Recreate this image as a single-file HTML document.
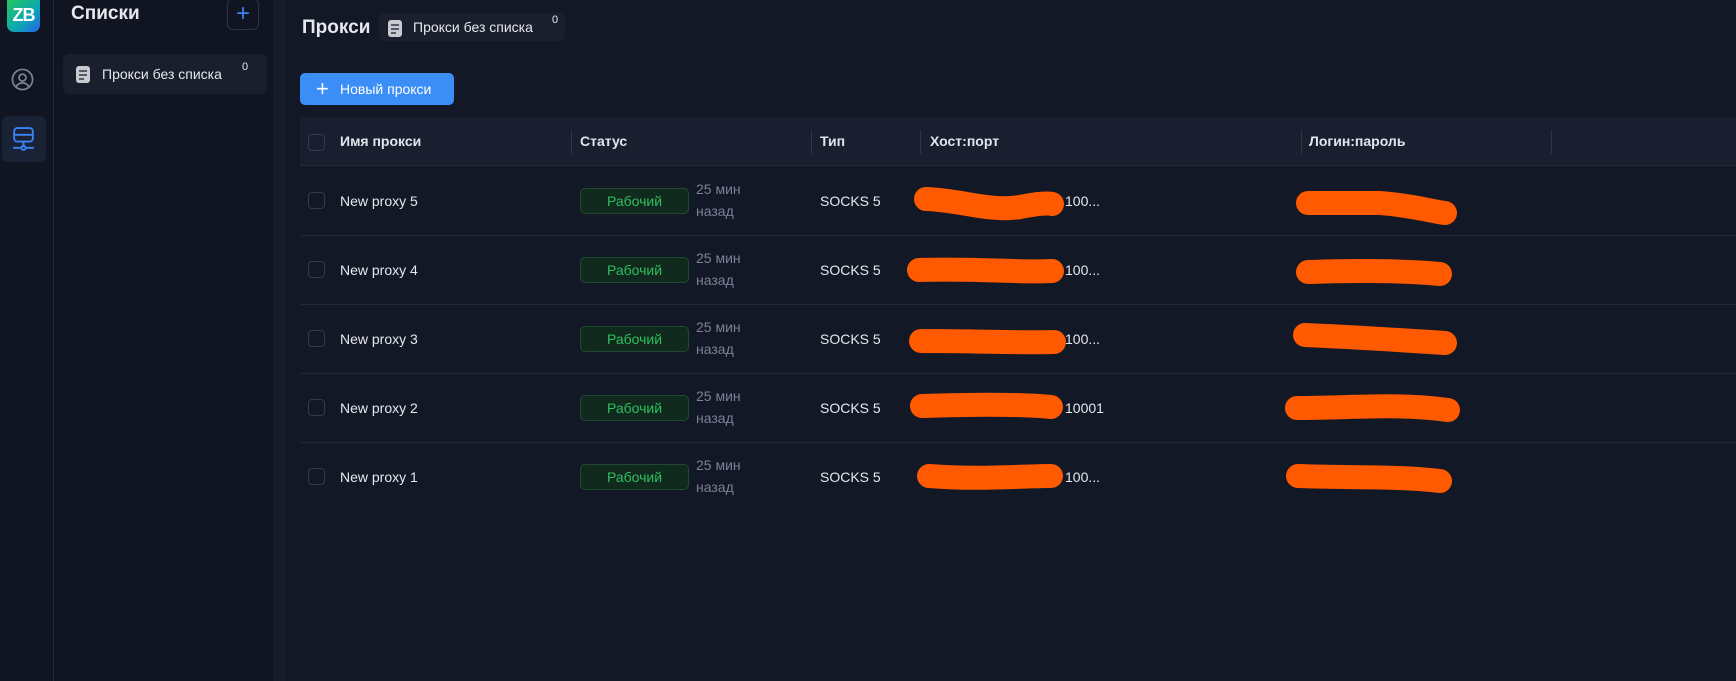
<!DOCTYPE html><html><head><meta charset="utf-8"><style>
*{margin:0;padding:0;box-sizing:border-box}
body{width:1736px;height:681px;background:#131826;font-family:"Liberation Sans","Noto Sans CJK SC",sans-serif;color:#e6e8ee;position:relative;overflow:hidden}
.a{position:absolute}
.cb{position:absolute;width:17px;height:17px;border:1.5px solid #343a4a;border-radius:4px}
.hd{font-weight:bold;font-size:14px;color:#e2e5ec;top:133px}
.sep{position:absolute;top:130px;width:1px;height:24px;background:#30364a}
.rowsep{position:absolute;left:300px;right:0;height:1px;background:#222839}
.nm{font-size:14px;color:#e6e8ee}
.bd{position:absolute;left:580px;width:109px;height:26px;border:1px solid #1f4a30;background:#112a1e;border-radius:5px;color:#2fbf5f;font-size:14px;text-align:center;line-height:24px}
.tm{position:absolute;left:696px;font-size:14px;color:#7b8196;line-height:22px}
.ty{position:absolute;left:820px;font-size:14px}
.hp{position:absolute;left:1065px;font-size:14px}
.doc{position:absolute;width:14px;height:17px;background:#c8cad0;border-radius:3px}
.doc i{position:absolute;left:3px;height:1.6px;background:#555a66}
</style></head><body>
<div class="a" style="left:0;top:0;width:54px;height:681px;background:#111521;border-right:1px solid #232838"></div>
<div class="a" style="left:54px;top:0;width:219px;height:681px;background:#111521"></div>
<div class="a" style="left:273px;top:0;width:13px;height:681px;background:#171c29"></div>
<div class="a" style="left:7px;top:0;width:33px;height:32px;border-radius:0 0 7px 7px;background:linear-gradient(135deg,#22c55e,#0ea5b5 60%,#2563eb);color:#fff;font-weight:bold;font-size:18px;text-align:center;line-height:30px;letter-spacing:-1px">ZB</div>
<svg class="a" style="left:11px;top:68px" width="23" height="23" viewBox="0 0 24 24" fill="none" stroke="#7d8394" stroke-width="1.8"><circle cx="12" cy="12" r="10.5"/><circle cx="12" cy="10" r="3.6"/><path d="M5.5 19.5c1.5-3 4-4 6.5-4s5 1 6.5 4"/></svg>
<div class="a" style="left:2px;top:116px;width:44px;height:46px;background:#1a2236;border-radius:6px"></div>
<svg class="a" style="left:11px;top:126px" width="25" height="26" viewBox="0 0 24 25" fill="none" stroke="#3b82f6" stroke-width="1.8"><rect x="3" y="2" width="18" height="13" rx="3"/><path d="M3 8.5h18M12 15v5M2 21h7M15 21h7"/><circle cx="12" cy="21" r="2"/></svg>
<div class="a" style="left:71px;top:3px;font-size:19px;font-weight:bold">Списки</div>
<div class="a" style="left:227px;top:-2px;width:32px;height:32px;border:1px solid #2d3345;border-radius:6px;color:#3b82f6;font-size:24px;text-align:center;line-height:30px">+</div>
<div class="a" style="left:63px;top:54px;width:204px;height:40px;background:#1a1f2d;border-radius:6px"></div>
<div class="doc" style="left:76px;top:66px"><i style="top:4px;width:8px"></i><i style="top:8px;width:8px"></i><i style="top:12px;width:5px"></i></div>
<div class="a" style="left:102px;top:66px;font-size:14px">Прокси без списка</div>
<div class="a" style="left:242px;top:61px;font-size:11px">0</div>
<div class="a" style="left:302px;top:17px;font-size:19px;font-weight:bold">Прокси</div>
<div class="a" style="left:379px;top:13px;width:186px;height:28px;background:#1a1f2d;border-radius:6px"></div>
<div class="doc" style="left:388px;top:20px"><i style="top:4px;width:8px"></i><i style="top:8px;width:8px"></i><i style="top:12px;width:5px"></i></div>
<div class="a" style="left:413px;top:19px;font-size:14px">Прокси без списка</div>
<div class="a" style="left:552px;top:14px;font-size:11px">0</div>
<div class="a" style="left:300px;top:73px;width:154px;height:32px;background:#3b8ef6;border-radius:5px;color:#fff;font-size:14px;line-height:32px;padding-left:40px">Новый прокси</div>
<div class="a" style="left:316px;top:79px;color:#fff;font-size:22px;line-height:20px">+</div>
<div class="a" style="left:300px;top:117px;width:1436px;height:49px;background:#1a1f2f;border-bottom:1px solid #242a3a"></div>
<div class="cb" style="left:308px;top:134px"></div>
<div class="a hd" style="left:340px">Имя прокси</div>
<div class="sep" style="left:571px"></div><div class="a hd" style="left:580px">Статус</div>
<div class="sep" style="left:811px"></div><div class="a hd" style="left:820px">Тип</div>
<div class="sep" style="left:920px"></div><div class="a hd" style="left:930px">Хост:порт</div>
<div class="sep" style="left:1301px"></div><div class="a hd" style="left:1309px">Логин:пароль</div>
<div class="sep" style="left:1551px"></div>
<div class="rowsep" style="top:235px"></div><div class="rowsep" style="top:304px"></div><div class="rowsep" style="top:373px"></div><div class="rowsep" style="top:442px"></div>

<div class="cb" style="left:308px;top:192px"></div><div class="a nm" style="left:340px;top:193px">New proxy 5</div><div class="bd" style="top:188px">Рабочий</div><div class="tm" style="top:178px">25 мин<br>назад</div><div class="ty" style="top:193px">SOCKS 5</div><div class="hp" style="top:193px">100...</div>
<div class="cb" style="left:308px;top:261px"></div><div class="a nm" style="left:340px;top:262px">New proxy 4</div><div class="bd" style="top:257px">Рабочий</div><div class="tm" style="top:247px">25 мин<br>назад</div><div class="ty" style="top:262px">SOCKS 5</div><div class="hp" style="top:262px">100...</div>
<div class="cb" style="left:308px;top:330px"></div><div class="a nm" style="left:340px;top:331px">New proxy 3</div><div class="bd" style="top:326px">Рабочий</div><div class="tm" style="top:316px">25 мин<br>назад</div><div class="ty" style="top:331px">SOCKS 5</div><div class="hp" style="top:331px">100...</div>
<div class="cb" style="left:308px;top:399px"></div><div class="a nm" style="left:340px;top:400px">New proxy 2</div><div class="bd" style="top:395px">Рабочий</div><div class="tm" style="top:385px">25 мин<br>назад</div><div class="ty" style="top:400px">SOCKS 5</div><div class="hp" style="top:400px">10001</div>
<div class="cb" style="left:308px;top:468px"></div><div class="a nm" style="left:340px;top:469px">New proxy 1</div><div class="bd" style="top:464px">Рабочий</div><div class="tm" style="top:454px">25 мин<br>назад</div><div class="ty" style="top:469px">SOCKS 5</div><div class="hp" style="top:469px">100...</div>

<svg class="a" style="left:0;top:0" width="1736" height="681" fill="none" stroke="#ff5a00" stroke-width="24" stroke-linecap="round" stroke-linejoin="round">
<path d="M926 199 C960 200 990 212 1020 207 C1040 203 1050 203 1052 204"/>
<path d="M1308 203 L1380 203 C1410 205 1430 211 1445 213"/>
<path d="M919 270 C980 268 1020 273 1052 271"/>
<path d="M1308 272 C1360 270 1410 271 1440 274"/>
<path d="M921 341 C980 341 1020 343 1054 342"/>
<path d="M1305 335 C1350 337 1400 340 1445 343"/>
<path d="M922 406 C980 404 1020 404 1051 407"/>
<path d="M1297 408 C1350 408 1400 403 1448 410"/>
<path d="M929 476 C980 480 1020 476 1051 476"/>
<path d="M1298 476 C1350 478 1400 476 1440 481"/>
</svg>
</body></html>
